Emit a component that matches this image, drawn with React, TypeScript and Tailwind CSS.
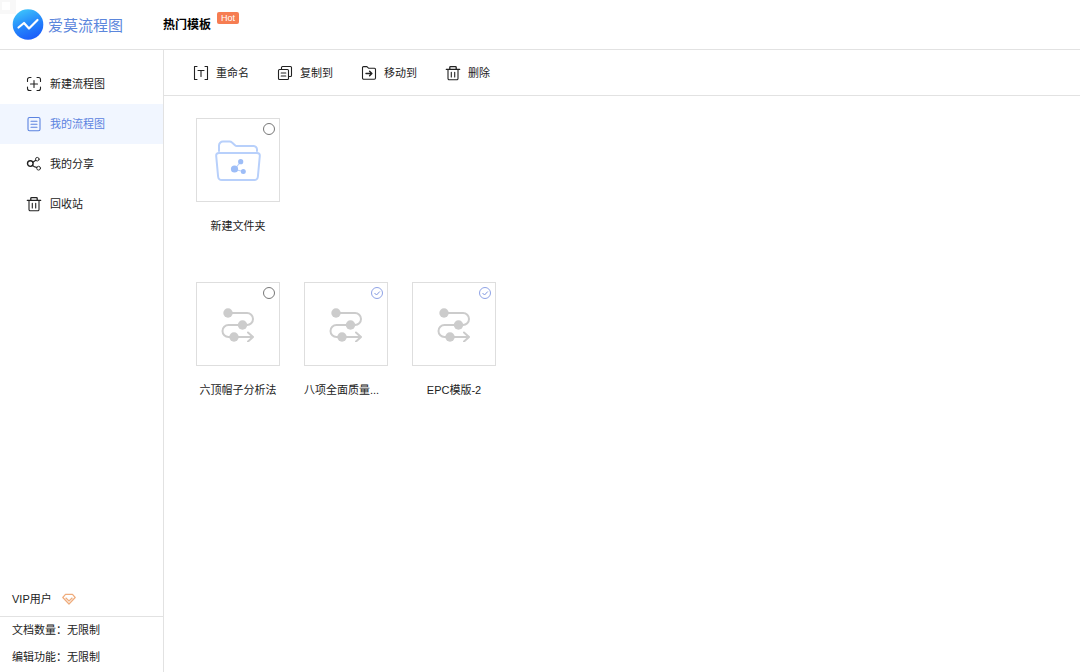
import { useState } from "react";
import type { ReactNode } from "react";

function Icon({ children }: { children: ReactNode }) {
  return (
    <svg
      className="w-4 h-4 shrink-0"
      viewBox="0 0 16 16"
      fill="none"
      stroke="currentColor"
      strokeWidth="1.1"
      strokeLinecap="round"
      strokeLinejoin="round"
      aria-hidden="true"
    >
      {children}
    </svg>
  );
}

const NewIcon = () => (
  <Icon>
    <path d="M1.500 5.500V3.500a2 2 0 0 1 2-2H5M11 1.500h1.500a2 2 0 0 1 2 2v2M14.500 11v1.500a2 2 0 0 1-2 2H11M5 14.500H3.500a2 2 0 0 1-2-2V11M4.500 8h7M8 4.500v7" />
  </Icon>
);

const DocIcon = () => (
  <Icon>
    <rect x="2" y="1.500" width="12" height="13.300" rx="1.500" />
    <path d="M5 5.200h6M5 8.200h6M5 11.200h6" />
  </Icon>
);

const ShareIcon = () => (
  <Icon>
    <circle cx="4.300" cy="7.600" r="2.800" strokeWidth="1.400" />
    <circle cx="11.300" cy="3.200" r="1.800" strokeWidth="0.900" />
    <circle cx="12.600" cy="12.200" r="1.900" strokeWidth="0.900" />
    <path d="M6.800 6.200l3-2M6.500 9.400q1.600 1.800 4.200 2" />
  </Icon>
);

const TrashIcon = () => (
  <Icon>
    <path strokeWidth="1.300" d="M1.300 4.300h13.400M4.800 4V2.400a.8.8 0 0 1 .8-.8h4.800a.8.8 0 0 1 .8.8V4" />
    <path d="M3 4.800v8.700a1.200 1.200 0 0 0 1.200 1.200h7.600a1.200 1.200 0 0 0 1.200-1.200V4.800M6.300 7.300v4.600M9.700 7.300v4.600" />
  </Icon>
);

const RenameIcon = () => (
  <Icon>
    <path d="M4 1.500H1.500v13H4M12 1.500h2.500v13H12M5 5.500h6M8 5.500v6" />
  </Icon>
);

const CopyIcon = () => (
  <Icon>
    <rect x="1.500" y="4.500" width="10" height="10" rx="1" />
    <path d="M4.500 4.500v-2a1 1 0 0 1 1-1h8a1 1 0 0 1 1 1v8a1 1 0 0 1-1 1h-2M4.200 8h4.600M4.200 11h4.600" />
  </Icon>
);

const MoveIcon = () => (
  <Icon>
    <path d="M1.500 13V2.600a1 1 0 0 1 1-1h3.400l1.600 1.600h6a1 1 0 0 1 1 1V13a1.200 1.200 0 0 1-1.200 1.200H2.700A1.200 1.200 0 0 1 1.500 13z" />
    <path strokeWidth="1.400" d="M5 8.500h5.800M8.600 6.200l2.300 2.300-2.300 2.300" />
  </Icon>
);

function FolderArt() {
  return (
    <svg
      className="w-12 h-12 text-[#b8d0fb]"
      viewBox="0 -2 48 48"
      fill="none"
      stroke="currentColor"
      strokeWidth="2"
      strokeLinecap="round"
      strokeLinejoin="round"
      aria-hidden="true"
    >
      <path d="M5 13V7.500a4 4 0 0 1 4-4h6.500q1.500 0 2.500 1l3 2.700q.8.800 1.800.800H39.500a3.500 3.500 0 0 1 3.500 3.500V13" />
      <path d="M5 15h38q3 0 2.800 3l-1.900 20.500q-.3 3.500-3.800 3.500H7.900q-3.500 0-3.800-3.500L2.200 18Q2 15 5 15z" />
      <path strokeWidth="1.200" d="M20.500 31.500l6-7.500M20.500 31.500l9 2" />
      <g className="text-[#9dbdf7]" fill="currentColor" stroke="none">
        <circle cx="20.500" cy="31" r="3.600" />
        <circle cx="26.700" cy="23.700" r="2.600" />
        <circle cx="29.300" cy="33.500" r="2.500" />
      </g>
    </svg>
  );
}

function FlowArt() {
  return (
    <svg
      className="w-9 h-9 text-[#cccccc]"
      viewBox="0 -1 36 36"
      fill="none"
      stroke="currentColor"
      strokeWidth="2"
      strokeLinecap="round"
      strokeLinejoin="round"
      aria-hidden="true"
    >
      <path d="M8 6h19a6 6 0 0 1 0 12H8.500a5.500 5.500 0 0 0 0 12H32M28 25.500l5 4.500-5 4.500" />
      <g fill="currentColor" stroke="none">
        <circle cx="8" cy="6" r="4.700" />
        <circle cx="22.500" cy="18" r="4.700" />
        <circle cx="14" cy="30" r="4.700" />
      </g>
    </svg>
  );
}

const navItems = [
  { label: "新建流程图", icon: <NewIcon /> },
  { label: "我的流程图", icon: <DocIcon />, active: true },
  { label: "我的分享", icon: <ShareIcon /> },
  { label: "回收站", icon: <TrashIcon /> },
];

const tools = [
  { label: "重命名", icon: <RenameIcon /> },
  { label: "复制到", icon: <CopyIcon /> },
  { label: "移动到", icon: <MoveIcon /> },
  { label: "删除", icon: <TrashIcon /> },
];

type TileProps = { name: string; art: ReactNode; selected?: boolean; align?: string };

function Tile({ name, art, selected = false, align = "text-center" }: TileProps) {
  const [checked, setChecked] = useState(selected);

  return (
    <label className="block w-[84px] cursor-pointer">
      <div className="relative flex items-center justify-center h-[84px] border border-[#dedede]">
        {art}
        <input
          type="checkbox"
          checked={checked}
          onChange={() => setChecked(!checked)}
          className="peer absolute top-1 right-1 w-3 h-3 appearance-none rounded-full border border-[#777777] checked:border-[#8fa3e6]"
        />
        <svg
          className="absolute top-1 right-1 w-3 h-3 hidden peer-checked:block pointer-events-none text-[#7f97e0]"
          viewBox="0 0 12 12"
          fill="none"
          stroke="currentColor"
          aria-hidden="true"
        >
          <path d="M3.500 6l2 2 3.300-3.500" />
        </svg>
      </div>
      <div className={`mt-4 leading-4 whitespace-nowrap ${align}`}>{name}</div>
    </label>
  );
}

export default function App() {
  return (
    <div className="flex flex-col min-h-screen bg-white text-[11px] leading-4 text-[#222222] font-['Liberation_Sans','Noto_Sans_CJK_SC',sans-serif]">
      {/* Header */}
      <header className="relative flex items-center h-[50px] pl-3 border-b border-[#e2e2e2]">
        {/* Faint corner mark */}
        <div className="absolute top-0 left-0 w-4 h-3.5 p-0.5 bg-[#f8f8f8]">
          <div className="w-2 h-2 bg-white" />
        </div>
        <a href="#" className="relative flex items-center gap-1 text-[15px] leading-5 text-[#5b86dc]">
          <svg className="w-8 h-8" viewBox="0 0 32 32" aria-hidden="true">
            <defs>
              <linearGradient id="logo" x1="0.2" y1="0" x2="0.6" y2="1">
                <stop offset="0" stopColor="#3fc8fb" />
                <stop offset="0.5" stopColor="#268bfb" />
                <stop offset="1" stopColor="#1b5cfa" />
              </linearGradient>
            </defs>
            <circle cx="16" cy="15.500" r="15.300" fill="url(#logo)" />
            <path
              d="M6.500 18.500l5.500-4.500 5 5.500 8.500-8.500"
              fill="none"
              stroke="white"
              strokeWidth="2.200"
              strokeLinecap="round"
              strokeLinejoin="round"
            />
          </svg>
          <span className="pt-0.5">爱莫流程图</span>
        </a>
        <a href="#" className="flex items-start ml-10 gap-1.5 text-black">
          <span className="py-2 text-xs font-bold">热门模板</span>
          <span className="mt-[3px] px-1 h-3 rounded-xs bg-[#f67d52] text-[9px] leading-3 text-white">Hot</span>
        </a>
      </header>

      <div className="flex flex-1">
        {/* Sidebar */}
        <aside className="flex flex-col justify-between w-[164px] shrink-0 border-r border-[#e2e2e2]">
          <nav className="pt-[14px]">
            {navItems.map((item) => (
              <a
                key={item.label}
                href="#"
                className={`flex items-center gap-2 h-10 pl-[26px] ${item.active ? "bg-[#f1f6ff] text-[#5b83e0]" : ""}`}
              >
                {item.icon}
                {item.label}
              </a>
            ))}
          </nav>
          <div className="pb-px">
            <div className="flex items-center gap-2.5 h-[35px] pl-3 border-b border-[#e2e2e2]">
              VIP用户
              <svg
                className="w-3.5 h-3.5 text-[#efac7c]"
                viewBox="0 0 14 14"
                fill="none"
                stroke="currentColor"
                strokeWidth="1.200"
                strokeLinejoin="round"
                aria-hidden="true"
              >
                <path d="M3.500 2.300h7l2.700 3.200L7 12 .8 5.500zM3.600 5.700L7 9l3.400-3.300" />
              </svg>
            </div>
            <p className="pl-3 leading-[27px]">文档数量：无限制</p>
            <p className="pl-3 leading-[27px]">编辑功能：无限制</p>
          </div>
        </aside>

        {/* Content */}
        <main className="flex-1">
          <div className="flex items-center gap-7 h-[46px] pt-px pl-[29px] border-b border-[#e2e2e2]">
            {tools.map((tool) => (
              <button key={tool.label} type="button" className="flex items-center gap-[7px] cursor-pointer">
                {tool.icon}
                {tool.label}
              </button>
            ))}
          </div>
          <div className="flex flex-col gap-12 px-8 py-[22px]">
            <div className="flex flex-wrap gap-6">
              <Tile name="新建文件夹" art={<FolderArt />} />
            </div>
            <div className="flex flex-wrap gap-6">
              <Tile name="六顶帽子分析法" art={<FlowArt />} />
              <Tile name="八项全面质量..." art={<FlowArt />} selected align="text-left" />
              <Tile name="EPC模版-2" art={<FlowArt />} selected />
            </div>
          </div>
        </main>
      </div>
    </div>
  );
}
